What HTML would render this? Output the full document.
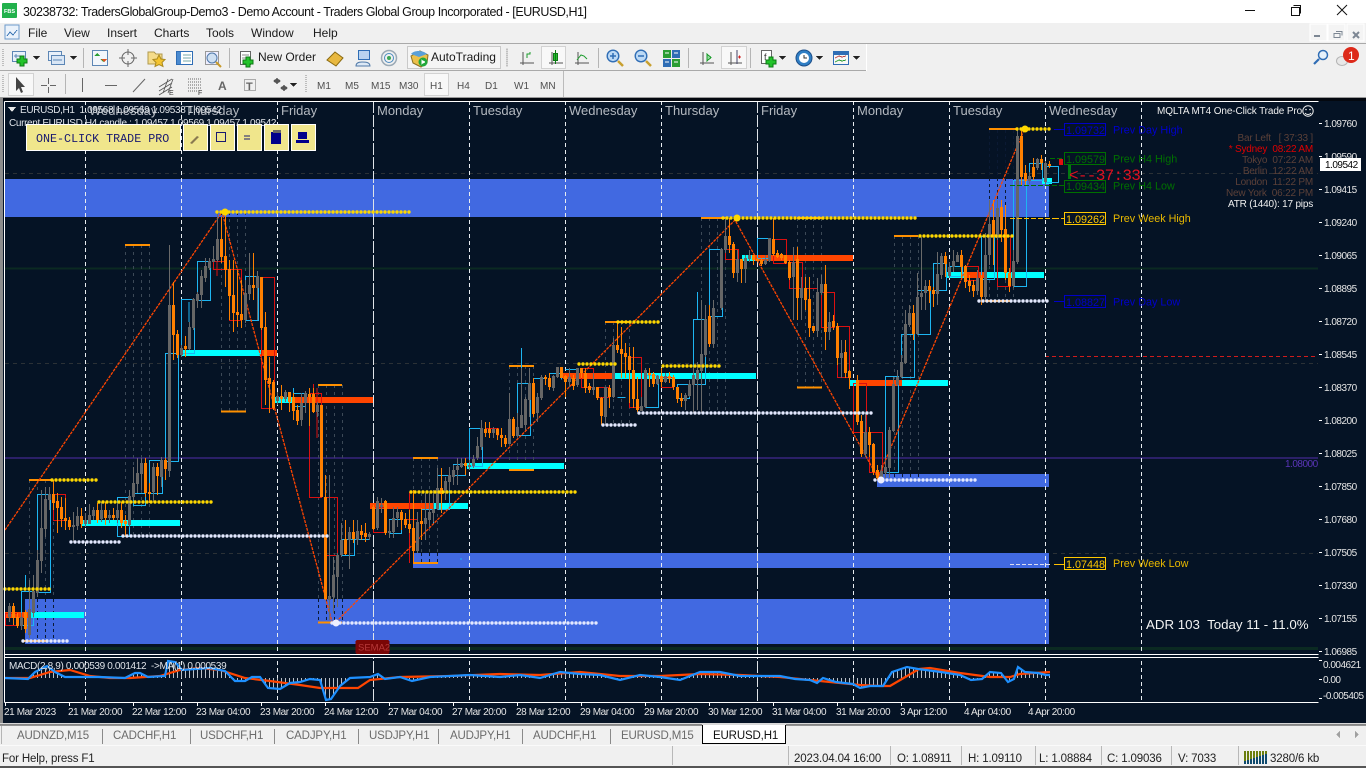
<!DOCTYPE html>
<html lang="en"><head><meta charset="utf-8"><title>MT4 EURUSD,H1</title>
<style>
html,body{margin:0;padding:0;background:#f0f0f0;width:1366px;height:768px;overflow:hidden}
svg{display:block;position:absolute;left:0;top:0}
text{font-family:"Liberation Sans",sans-serif;white-space:pre}
.m{font-size:12px;fill:#1a1a1a}
.t{font-size:10px;fill:#4f4f4f}
.tab{font-size:11.5px;fill:#6b6b6b;letter-spacing:-.15px}
.s{font-size:11.5px;fill:#222;letter-spacing:-.15px}
.day{font-size:13px;fill:#b4b9c0}
.p{font-size:10px;fill:#e6e6e6;letter-spacing:-.5px}
.tm{font-size:10px;fill:#e6e6e6;letter-spacing:-.4px}
.h{font-size:10px;fill:#dfe3e8;letter-spacing:-.35px}
.i{font-size:10px;text-anchor:end;letter-spacing:-.2px}
.v{fill:none;stroke:#e8ecf0;stroke-width:1;stroke-dasharray:4 3}
.g{fill:none;stroke:#2b3136;stroke-width:1;stroke-dasharray:4 4}
.col{fill:none;stroke:#3c4957;stroke-width:1;stroke-dasharray:3 4}
.cold{fill:none;stroke:#0b1a34;stroke-width:1;stroke-dasharray:3 3}
.yd{fill:none;stroke:#ffd800;stroke-width:3.4;stroke-linecap:round;stroke-dasharray:0 4}
.wd{fill:none;stroke:#e4e9ff;stroke-width:3.4;stroke-linecap:round;stroke-dasharray:0 4}
.or{fill:none;stroke:#ff9000;stroke-width:2}
.gw{fill:none;stroke:#6a6a6a;stroke-width:1}
.gb{fill:none;stroke:#666;stroke-width:3}
.ow{fill:none;stroke:#ff8000;stroke-width:1}
.ob{fill:none;stroke:#ff8000;stroke-width:3}
.cy{fill:none;stroke:#1db5f2;stroke-width:1}
.rd{fill:none;stroke:#dc1010;stroke-width:1}
.ic{fill:none;stroke:#555;stroke-width:1}
</style></head><body>
<svg width="1366" height="768" viewBox="0 0 1366 768" shape-rendering="crispEdges">
<defs>
<pattern id="hp" x="1" y="0" width="4" height="10" patternUnits="userSpaceOnUse"><rect x="0" y="0" width="1" height="10" fill="#b9c0c8"/></pattern>
<g id="plus"><path d="M3 0h4v3h3v4H7v3H3V7H0V3h3z" fill="#22c32a" stroke="#0d7a14" stroke-width=".7"/></g>
<g id="axes"><path d="M3 1v13M0 12h14" fill="none" stroke="#555"/></g>
</defs>

<!-- window chrome -->
<rect width="1366" height="23" fill="#fff"/>
<rect y="23" width="1366" height="75" fill="#f0f0f0"/>
<rect x="2" y="3" width="15" height="15" fill="#22b14c" rx="1"/>
<text x="4" y="13" style="font-size:5.5px;font-weight:bold;fill:#fff">FBS</text>
<text x="23" y="16" style="font-size:12.5px;fill:#111" textLength="564" lengthAdjust="spacing">30238732: TradersGlobalGroup-Demo3 - Demo Account - Traders Global Group Incorporated - [EURUSD,H1]</text>
<path d="M1245 10.500h10" stroke="#111" fill="none"/>
<path d="M1291.500 7.500h8v8h-8zM1293.500 5.500h7v8" fill="none" stroke="#111"/>
<path d="M1337 5l10 10M1347 5l-10 10" stroke="#111" fill="none" shape-rendering="auto"/>

<!-- menu -->
<rect x="5" y="25" width="14" height="14" fill="#eaf2fb" stroke="#6c9acb"/>
<path d="M7 36l3-4 3 3 4-5" stroke="#3f78b5" fill="none"/>
<text class="m" x="28" y="37">File</text><text class="m" x="64" y="37">View</text><text class="m" x="107" y="37">Insert</text><text class="m" x="154" y="37">Charts</text><text class="m" x="206" y="37">Tools</text><text class="m" x="251" y="37">Window</text><text class="m" x="313" y="37">Help</text>
<rect x="1310" y="24" width="17" height="17" fill="#f4f4f4" stroke="#fff"/><rect x="1328" y="24" width="17" height="17" fill="#f4f4f4" stroke="#fff"/><rect x="1347" y="24" width="17" height="17" fill="#f4f4f4" stroke="#fff"/>
<rect x="1314" y="35" width="6" height="2" fill="#7d8793"/>
<path d="M1334 33.500h6v4h-6zM1336 31.500h6v4" fill="none" stroke="#7d8793"/>
<path d="M1353 32l6 6M1359 32l-6 6" stroke="#7d8793" stroke-width="2" shape-rendering="auto"/>
<rect y="43" width="866" height="1" fill="#a9a9a9"/><rect x="866" y="43" width="500" height="1" fill="#a9a9a9"/>
<rect y="70" width="866" height="1" fill="#a9a9a9"/><rect x="866" y="44" width="1" height="27" fill="#fff"/>
<rect x="563" y="71" width="1" height="26" fill="#bbb"/>

<!-- toolbar 1 -->
<path d="M3 49v18M3 75v18" stroke="#bdbdbd" stroke-width="2" stroke-dasharray="1 1"/>
<path d="M507 49v18" stroke="#bdbdbd" stroke-width="2" stroke-dasharray="1 1"/>
<path d="M306 75v18" stroke="#bdbdbd" stroke-width="2" stroke-dasharray="1 1"/>
<g>
<rect x="12.500" y="51.500" width="13" height="10" fill="#e8f0fa" stroke="#5c86b5"/><path d="M14 56h9M16 54v4" stroke="#5c86b5"/><use href="#plus" x="17" y="56"/>
<path d="M33 56h7l-3.500 4z" fill="#222"/>
<rect x="48.500" y="51.500" width="13" height="9" fill="#e8f0fa" stroke="#5c86b5"/><rect x="51.500" y="55.500" width="13" height="9" fill="#d9e6f5" stroke="#5c86b5"/><path d="M53 60h9" stroke="#5c86b5"/>
<path d="M70 56h7l-3.500 4z" fill="#222"/>
<rect x="83" y="48" width="1" height="20" fill="#b5b5b5"/>
<rect x="92.500" y="50.500" width="15" height="15" fill="#f2f6fb" stroke="#5c86b5"/><path d="M97 53l3 3h-6zM103 62l-3-3h6z" fill="#2a9d34"/><path d="M101 59l3 3 3-3z" fill="#dd5522"/>
<g shape-rendering="auto"><circle cx="128" cy="58" r="6" fill="none" stroke="#666"/><path d="M128 49v6M128 61v6M119 58h6M131 58h6" stroke="#666"/></g>
<path d="M148 52h6l2 2h6v10h-14z" fill="#f5dc8a" stroke="#b09a50"/><path d="M159 55l2 4 4 .5-3 3 1 4-4-2-4 2 1-4-3-3 4-.5z" fill="#f4c430" stroke="#aa8a20" shape-rendering="auto"/>
<rect x="176.500" y="51.500" width="16" height="13" fill="#fff" stroke="#2f6db5"/><rect x="177" y="52" width="4" height="12" fill="#4a8ad0"/><path d="M183 55h8M183 58h8M183 61h8" stroke="#7aa"/>
<rect x="205.500" y="51.500" width="13" height="13" fill="#eef" stroke="#999"/><g shape-rendering="auto"><circle cx="212" cy="58" r="5" fill="#cfe0f2" stroke="#5079a8"/><path d="M216 62l5 5" stroke="#c89a2a" stroke-width="2"/></g>
<rect x="229" y="48" width="1" height="20" fill="#b5b5b5"/>
<rect x="240.500" y="51.500" width="10" height="13" fill="#fff" stroke="#666"/><path d="M242 55h7M242 58h7" stroke="#888"/><use href="#plus" x="243" y="57"/>
<text x="258" y="61" style="font-size:12px;fill:#1a1a1a">New Order</text>
<path d="M327 60l8-8 8 6-7 8z" fill="#e8b840" stroke="#8a6a10" shape-rendering="auto"/>
<rect x="358.500" y="50.500" width="11" height="9" fill="#b9d3f0" stroke="#2f6db5"/><path d="M356 66c0-3 3-4 6-4s8 0 8 4z" fill="#dce8f5" stroke="#5079a8" shape-rendering="auto"/>
<g shape-rendering="auto" fill="none"><circle cx="389" cy="58" r="7.500" stroke="#9aa9b5" stroke-width="1.500"/><circle cx="389" cy="58" r="4.500" stroke="#4a8ac0"/><circle cx="389" cy="58" r="2" fill="#3aa655"/></g>
<rect x="407.500" y="46.500" width="93" height="22" fill="#f5f5f5" stroke="#c9c9c9"/>
<path d="M411 56l9-5 8 4-1 8-6 4-8-4z" fill="#ecc04a" stroke="#8a7020" shape-rendering="auto"/><path d="M411 54c3-4 12-4 16 0l-8 3z" fill="#5aa0d8" shape-rendering="auto"/><circle cx="423" cy="62" r="4.500" fill="#21a83a" shape-rendering="auto"/><path d="M421.500 59.500l4 2.500-4 2.500z" fill="#fff"/>
<text x="431" y="61" style="font-size:12px;fill:#1a1a1a">AutoTrading</text>
<path d="M507 48v19" stroke="#c5c5c5"/>
<rect x="541.500" y="46.500" width="24" height="22" fill="#f8f8f8" stroke="#d2d2d2"/>
<use href="#axes" x="520" y="51"/><path d="M527 58v-4h3v-2" stroke="#1c9c2c" fill="none"/>
<use href="#axes" x="549" y="51"/><rect x="553.500" y="53.500" width="4" height="7" fill="#25c02e" stroke="#0d7a14"/><path d="M555.500 50v14" stroke="#0d7a14"/>
<use href="#axes" x="575" y="51"/><path d="M577 60l4-5 3 1 3 3" stroke="#1c9c2c" fill="none" shape-rendering="auto"/>
<rect x="598" y="48" width="1" height="20" fill="#b5b5b5"/>
<g shape-rendering="auto">
<circle cx="613" cy="56" r="5.800" fill="#bcd9f5" stroke="#2f6db5" stroke-width="1.400"/><path d="M610 56h6M613 53v6" stroke="#2f6db5" stroke-width="1.500"/><path d="M618 61l5 5" stroke="#c8a030" stroke-width="2.500"/>
<circle cx="641" cy="56" r="5.800" fill="#bcd9f5" stroke="#2f6db5" stroke-width="1.400"/><path d="M638 56h6" stroke="#2f6db5" stroke-width="1.500"/><path d="M646 61l5 5" stroke="#c8a030" stroke-width="2.500"/>
</g>
<rect x="663" y="50" width="8" height="8" fill="#2a9d34"/><rect x="672" y="50" width="8" height="8" fill="#2f6db5"/><rect x="663" y="59" width="8" height="8" fill="#2f6db5"/><rect x="672" y="59" width="8" height="8" fill="#2a9d34"/><path d="M665 53h4M674 53h4M665 62h4M674 62h4" stroke="#fff"/>
<rect x="688" y="48" width="1" height="20" fill="#b5b5b5"/>
<use href="#axes" x="700" y="51"/><path d="M707 54l4 3.500-4 3.500z" fill="#8fd89a" stroke="#1c9c2c"/>
<rect x="721.500" y="46.500" width="25" height="22" fill="#f8f8f8" stroke="#d2d2d2"/><use href="#axes" x="728" y="51"/><path d="M737 50v14" stroke="#446"/><path d="M738 57h3M739.500 55.500v3" stroke="#d02020"/>
<rect x="750" y="48" width="1" height="20" fill="#b5b5b5"/>
<rect x="761.500" y="50.500" width="10" height="13" fill="#fff" stroke="#666"/><text x="764" y="60" style="font-size:9px;fill:#333">f</text><use href="#plus" x="766" y="57"/>
<path d="M779 56h7l-3.500 4z" fill="#222"/>
<g shape-rendering="auto"><circle cx="804" cy="58" r="8" fill="#2f7ec4" stroke="#1d4f8a"/><circle cx="804" cy="58" r="5" fill="#fff"/><path d="M804 55v3h3" stroke="#333" fill="none"/></g>
<path d="M816 56h7l-3.500 4z" fill="#222"/>
<rect x="833.500" y="51.500" width="15" height="13" fill="#f7f7f7" stroke="#2f6db5"/><rect x="834" y="52" width="14" height="3" fill="#2f6db5"/><path d="M835 58l4-2 3 1 4-1" stroke="#b44" fill="none"/><path d="M835 62l4-2 3 1 4-1" stroke="#2a9d34" fill="none"/>
<path d="M853 56h7l-3.500 4z" fill="#222"/>
</g>
<g shape-rendering="auto"><circle cx="1323" cy="55" r="4.500" fill="#e6f1fb" stroke="#2f6db5" stroke-width="1.500"/><path d="M1319 59l-5 5" stroke="#2f6db5" stroke-width="2.200"/>
<ellipse cx="1342" cy="61" rx="5.500" ry="4.500" fill="#e8e8e8" stroke="#b4b4b4"/><circle cx="1351" cy="55" r="8" fill="#dd2a1a"/></g>
<text x="1348" y="60" style="font-size:12px;fill:#fff">1</text>

<!-- toolbar 2 -->
<rect x="8.500" y="73.500" width="25" height="22" fill="#f8f8f8" stroke="#d2d2d2"/>
<path d="M16 77l0 14 3-3 2 5 2-1-2-5 4 0z" fill="#444" shape-rendering="auto"/>
<path d="M41 85.500h6M50 85.500h6M48.500 78v6M48.500 87v6" stroke="#666" fill="none"/>
<rect x="65" y="74" width="1" height="20" fill="#b5b5b5"/>
<path d="M82.500 78v14" stroke="#666"/><path d="M105 85.500h12" stroke="#666"/><path d="M133 92l12-13" stroke="#666" shape-rendering="auto"/>
<g stroke="#555" fill="none" shape-rendering="auto"><path d="M159 87l13-8M159 91l13-8M159 95l13-8M163 93l5-14M168 93l5-14" stroke-width=".8"/></g>
<text x="169" y="95" style="font-size:7px;fill:#333">E</text>
<path d="M188 79h14M188 82h14M188 85h14M188 88h14M188 91h9" stroke="#666" stroke-dasharray="1 1"/>
<text x="198" y="95" style="font-size:7px;fill:#333">F</text>
<text x="218" y="90" style="font-size:12px;font-weight:bold;fill:#666">A</text>
<rect x="244.500" y="79.500" width="11" height="11" fill="none" stroke="#666" stroke-dasharray="1 1"/>
<text x="246" y="90" style="font-size:11px;font-weight:bold;fill:#666">T</text>
<path d="M273 81l4-3 4 3-4 3zM280 88l4-3 4 3-4 3z" fill="#555"/>
<path d="M290 83h7l-3.500 4z" fill="#222"/>
<rect x="424.500" y="73.500" width="24" height="22" fill="#f8f8f8" stroke="#d2d2d2"/>
<text class="t" x="317" y="89">M1</text><text class="t" x="345" y="89">M5</text><text class="t" x="371" y="89">M15</text><text class="t" x="399" y="89">M30</text><text class="t" x="430" y="89">H1</text><text class="t" x="457" y="89">H4</text><text class="t" x="485" y="89">D1</text><text class="t" x="514" y="89">W1</text><text class="t" x="540" y="89">MN</text>

<!-- chart bg -->
<rect y="97" width="1366" height="1" fill="#9a9a9a"/>
<rect y="98" width="1366" height="627" fill="#051325"/>
<rect y="98" width="1366" height="3" fill="#04080f"/>
<rect x="0" y="98" width="3" height="627" fill="#8c8c8c"/>

<!-- grid -->
<path d="M5 173.500H1318M5 363.500H1318M5 553.500H1318" class="g"/>
<path d="M5 268.500H1318" stroke="#0b2a22" stroke-width="2" fill="none"/>
<path d="M5 648.500H1318" stroke="#0b2a22" stroke-width="3" fill="none"/>
<path d="M5 458H1318" stroke="#2b2068" stroke-width="2" fill="none"/>
<path d="M1045 356.500H1318" stroke="#d01c1c" stroke-dasharray="4 3" fill="none"/>

<!-- blue zones -->
<g fill="#4169e1">
<rect x="5" y="179" width="1044" height="38"/>
<rect x="877" y="474" width="172" height="13"/>
<rect x="413" y="553" width="636" height="15"/>
<rect x="25" y="599" width="1024" height="45"/>
</g>

<!-- column dashes -->
<path class="col" d="M125.500 245V536M133.500 245V536M141.500 245V536M149.500 245V536
M221.500 212V411M229.500 212V411M237.500 212V411M245.500 212V411
M318.500 385V599M326.500 385V599M334.500 385V599M342.500 385V599
M29.500 480V599M37.500 480V599M45.500 480V599M53.500 480V599
M605.500 322V425M613.500 322V425M621.500 322V425M629.500 322V425
M509.500 366V470M517.500 366V470M525.500 366V470M533.500 366V470
M413.500 458V553M421.500 458V553M429.500 458V553M437.500 458V553
M701.500 218V412M709.500 218V412M717.500 218V412M725.500 218V412
M797.500 218V387M805.500 218V387M813.500 218V387M821.500 218V387
M894.500 236V474M902.500 236V474M910.500 236V474M918.500 236V474
M989.500 217V300M997.500 217V300M1005.500 217V300M1013.500 217V300"/>
<path class="cold" d="M29.500 599V640M37.500 599V640M45.500 599V640M53.500 599V640M318.500 599V622M326.500 599V622M334.500 599V622M342.500 599V622M413.500 553V563M421.500 553V563M429.500 553V563M437.500 553V563M894.500 474V479M902.500 474V479M910.500 474V479M918.500 474V479M989.500 130V217M997.500 130V217M1005.500 130V217M1013.500 130V217M221.500 212V217M229.500 212V217M237.500 212V217"/>

<!-- vertical separators -->
<path class="v" d="M85.500 101V702M181.500 101V702M277.500 101V702M469.500 101V702M565.500 101V702M661.500 101V702M853.500 101V702M949.500 101V702M1045.500 101V702M1141.500 101V702"/>
<path d="M373.500 101V702M757.500 101V702" stroke="#dfe3e8" fill="none" stroke-dasharray="12 2"/>

<!-- horizontal thick bars -->
<g fill="#00ffff">
<rect x="5" y="612" width="79" height="6"/><rect x="82" y="520" width="98" height="6"/><rect x="182" y="350" width="95" height="6"/><rect x="275" y="397" width="40" height="6"/>
<rect x="433" y="503" width="35" height="6"/><rect x="467" y="463" width="97" height="6"/><rect x="615" y="373" width="141" height="6"/><rect x="742" y="255" width="45" height="6"/>
<rect x="850" y="380" width="7" height="6"/><rect x="902" y="380" width="46" height="6"/><rect x="946" y="272" width="98" height="6"/><rect x="1042" y="178" width="10" height="6"/>
</g>
<g fill="#ff4500">
<rect x="5" y="612" width="23" height="6"/><rect x="262" y="350" width="15" height="6"/><rect x="295" y="397" width="78" height="6"/><rect x="370" y="503" width="63" height="6"/>
<rect x="563" y="373" width="50" height="6"/><rect x="755" y="255" width="98" height="6"/><rect x="857" y="380" width="45" height="6"/><rect x="967" y="272" width="18" height="6"/>
</g>

<!-- orange level lines -->
<path class="or" d="M125 245h25M221 411.500h25M318 385h24M318 622.500h24M29 480h24M605 322h25M509 366h25M509 470h25M413 458h25M413 563h25M701 218h25M797 218h25M797 387.500h25M894 236h24M989 129h28M23 641h24M821 301h0M985 301h25"/>

<!-- boxes -->
<path class="cy" d="M165.500 353.500h13v108h-13zM181.500 299.500h13v54h-13zM197.500 261.500h13v39h-13zM245.500 276.500h13v44h-13zM293.500 393.500h12v13h-12zM21.500 591.500h12v34h-12zM37.500 494.500h13v98h-13zM117.500 497.500h12v39h-12zM133.500 493.500h12v12h-12zM149.500 460.500h13v33h-13zM341.500 539.500h13v16h-13zM354.500 539.500h15M389.500 519.500h12v14h-12zM421.500 509.500h12v14M437.500 475.500h12v34h-12zM453.500 464.500h12v11h-12zM469.500 428.500h13v38h-13zM517.500 383.500h13v52h-13zM533.500 378.500h12v6M549.500 373.500h12v6M565.500 369.500h12v6M617.500 397.500h8M645.500 375.500h13v32h-13zM677.500 384.500h12v14h-12zM693.500 319.500h12v65h-12zM709.500 249.500h13v67h-13zM757.500 238.500h13v20h-13zM885.500 376.500h13v96h-13zM901.500 334.500h13v43h-13zM917.500 290.500h13v44h-13zM933.500 263.500h13v27h-13zM949.500 266.500h13v10h-13zM981.500 236.500h13v43h-13zM1013.500 180.500h13v106h-13zM1029.500 163.500h13v17h-13zM1046.500 166.500h12v16h-12z
M25.500 575v15M189 322v-20M249.500 253v22M293.500 393v-5M461 560v-2M521.500 368v-20M413.500 505v-5M429.500 493v16M697.500 320v-28M889 466V430"/>
<path class="rd" d="M213.500 261.500h13v8h-13zM213.500 269.500h28M229.500 269.500h12v51h-12zM261.500 277.500h13v131h-13zM309.500 393.500h12v104h-12zM325.500 497.500h12v58h-12zM5.500 613.500h12v12h-12zM53.500 494.500h12v26h-12zM373.500 507.500h13v25h-13zM405.500 519.500h12v6M485.500 428.500h13v7M581.500 368.500h12v19h-12zM597.500 387.500h12v10h-12zM629.500 357.500h12v50h-12zM661.500 377.500h12v10h-12zM725.500 249.500h13v10h-13zM773.500 239.500h13v24h-13zM789.500 262.500h13v26h-13zM805.500 288.500h12v10M821.500 292.500h13v35h-13zM837.500 326.500h12v51h-12zM853.500 383.500h13v49h-13zM869.500 432.500h13v40h-13zM965.500 266.500h13v14h-13zM997.500 236.500h13v50h-13z
M409.500 492v71M317 388v50M329.500 475v30M313.500 394v-10M217 261v15"/>

<!-- zigzag -->
<path d="M5 530L222 212 332 622M336 622L735 220 878 478 1024 130" fill="none" stroke="#ff4500" stroke-width="1.300" stroke-dasharray="3 1" shape-rendering="auto"/>

<!-- candles -->
<path class="gw" d="M9.500 603V622M21.500 613V630M29.500 580V638M33.500 575V617M37.500 550V597M41.500 490V573M45.500 487V537M49.500 487V510M73.500 512V542M77.500 507V530M85.500 513V527M89.500 504V524M93.500 507V520M101.500 502V522M109.500 510V523M117.500 503V523M129.500 490V527M133.500 467V500M137.500 458V493M141.500 458V490M153.500 463V502M161.500 457V487M169.500 245V477M181.500 345V357M189.500 322V350M193.500 298V330M197.500 292V308M201.500 270V308M205.500 258V282M209.500 258V270M213.500 246V262M217.500 213V262M245.500 280V323M249.500 253V300M257.500 271V320M277.500 392V405M285.500 390V402M301.500 393V426M305.500 391V413M317.500 402V417M329.500 475V620M333.500 557V613M337.500 553V607M341.500 523V557M349.500 527V569M357.500 520V545M369.500 532V540M377.500 497V530M381.500 498V513M389.500 520V538M393.500 507V538M397.500 507V527M417.500 512V553M425.500 493V540M429.500 493V527M433.500 490V522M437.500 468V510M445.500 477V500M449.500 467V490M453.500 465V485M457.500 458V485M461.500 458V468M469.500 460V470M473.500 455V468M477.500 437V460M481.500 420V450M493.500 427V438M509.500 393V444M517.500 413V437M521.500 368V428M525.500 397V430M529.500 368V417M537.500 393V422M541.500 375V400M553.500 375V391M557.500 367V378M569.500 368V387M577.500 368V387M593.500 373V395M605.500 387V425M613.500 338V398M641.500 397V411M645.500 368V408M657.500 375V385M665.500 373V383M685.500 393V410M689.500 380V397M693.500 367V413M697.500 362V410M701.500 300V413M705.500 305V357M713.500 300V348M721.500 248V310M725.500 218V253M737.500 250V282M745.500 255V283M749.500 250V262M765.500 255V265M769.500 238V262M793.500 247V320M801.500 277V320M817.500 278V337M821.500 275V295M829.500 312V340M841.500 340V378M865.500 413V457M881.500 465V480M885.500 460V478M889.500 427V478M893.500 377V432M897.500 370V386M901.500 355V378M905.500 310V364M909.500 305V327M917.500 273V335M921.500 237V310M925.500 280V310M937.500 252V305M941.500 253V279M949.500 262V278M953.500 250V272M957.500 252V262M977.500 270V295M985.500 233V300M989.500 200V265M997.500 200V240M1013.500 250V288M1017.500 130V264M1029.500 172V184M1037.500 158V170M1045.500 161V185"/>
<path class="gb" d="M9.500 606V617M21.500 617V626M29.500 609V635M33.500 591V613M37.500 560V593M41.500 528V561M45.500 499V529M49.500 494V500M73.500 525V527M77.500 516V526M85.500 520V524M89.500 515V524M93.500 510V516M101.500 510V519M109.500 515V518M117.500 510V518M129.500 496V525M133.500 483V497M137.500 473V484M141.500 463V474M153.500 467V492M161.500 460V477M169.500 305V471M181.500 348V355M189.500 327V349M193.500 299V328M197.500 294V301M201.500 276V295M205.500 266V278M209.500 261V268M213.500 259V262M217.500 239V260M245.500 293V320M249.500 285V294M257.500 276V288M277.500 396V401M285.500 392V399M301.500 403V420M305.500 393V403M317.500 405V412M329.500 596V600M333.500 575V597M337.500 555V577M341.500 540V555M349.500 532V540M357.500 531V540M369.500 534V537M377.500 501V528M381.500 505V507M389.500 531V533M393.500 518V532M397.500 512V518M417.500 522V551M425.500 518V524M429.500 512V520M433.500 509V513M437.500 488V509M445.500 481V493M449.500 475V482M453.500 470V477M457.500 466V470M461.500 463V467M469.500 465V467M473.500 459V466M477.500 446V458M481.500 428V447M493.500 429V433M509.500 419V444M517.500 427V436M521.500 415V428M525.500 399V425M529.500 383V400M537.500 397V413M541.500 377V398M553.500 376V388M557.500 367V377M569.500 377V382M577.500 368V385M593.500 387V390M605.500 387V417M613.500 345V397M641.500 406V411M645.500 370V407M657.500 376V384M665.500 376V382M685.500 395V401M689.500 384V396M693.500 375V385M697.500 370V380M701.500 354V371M705.500 319V355M713.500 308V344M721.500 249V308M725.500 236V250M737.500 259V273M745.500 258V269M749.500 255V259M765.500 260V264M769.500 238V261M793.500 262V277M801.500 288V298M817.500 292V331M821.500 284V293M829.500 322V332M841.500 353V358M865.500 432V454M881.500 471V478M885.500 467V473M889.500 430V468M893.500 384V431M897.500 377V385M901.500 362V377M905.500 324V363M909.500 313V325M917.500 297V334M921.500 293V297M925.500 286V293M937.500 274V294M941.500 256V275M949.500 267V276M953.500 261V267M957.500 255V262M977.500 278V291M985.500 255V297M989.500 224V255M997.500 208V238M1013.500 261V286M1017.500 136V262M1029.500 176V181M1037.500 159V168M1045.500 163V182"/>
<path class="ow" d="M13.500 603V625M17.500 613V628M25.500 610V633M53.500 480V510M57.500 493V533M61.500 497V527M65.500 498V530M69.500 517V530M81.500 508V528M97.500 503V523M105.500 502V525M113.500 508V520M121.500 502V528M125.500 515V537M145.500 458V497M149.500 483V503M157.500 463V495M165.500 458V480M173.500 282V360M177.500 330V358M185.500 336V357M221.500 217V263M225.500 215V287M229.500 260V320M233.500 260V332M237.500 270V327M241.500 280V328M253.500 253V300M261.500 277V330M265.500 312V405M269.500 357V413M273.500 380V410M281.500 385V410M289.500 392V412M293.500 393V420M297.500 405V425M309.500 388V426M313.500 388V413M321.500 405V497M325.500 475V600M345.500 520V555M353.500 520V543M361.500 525V540M365.500 523V542M373.500 505V530M385.500 500V535M401.500 510V530M405.500 513V528M409.500 510V533M413.500 490V563M421.500 508V540M441.500 468V513M465.500 458V475M485.500 422V437M489.500 422V438M497.500 428V440M501.500 428V447M505.500 435V447M513.500 417V438M533.500 378V417M545.500 375V385M549.500 373V390M561.500 367V378M565.500 375V397M573.500 375V390M581.500 368V378M585.500 368V393M589.500 383V393M597.500 387V400M601.500 397V425M609.500 385V408M617.500 323V353M621.500 327V378M625.500 343V378M629.500 347V403M633.500 347V408M637.500 377V412M649.500 368V387M653.500 372V387M661.500 368V387M669.500 372V383M673.500 375V390M677.500 387V403M681.500 393V407M709.500 305V347M729.500 218V253M733.500 242V278M741.500 259V283M753.500 255V265M757.500 258V262M761.500 258V266M773.500 218V256M777.500 250V258M781.500 253V260M785.500 255V264M789.500 260V280M797.500 247V320M805.500 277V310M809.500 277V337M813.500 326V333M825.500 265V350M833.500 315V330M837.500 323V365M845.500 340V378M849.500 370V389M857.500 375V425M861.500 415V457M869.500 427V457M873.500 443V475M877.500 465V480M913.500 305V340M929.500 280V303M933.500 287V307M945.500 252V277M961.500 250V278M965.500 265V288M969.500 275V292M973.500 280V297M981.500 275V305M993.500 200V265M1001.500 200V242M1005.500 205V280M1009.500 268V292M1021.500 130V185M1025.500 165V185M1033.500 158V180M1041.500 155V170M1049.500 161V168"/>
<path class="ob" d="M13.500 606V618M17.500 617V626M25.500 612V629M53.500 494V503M57.500 501V508M61.500 507V519M65.500 518V521M69.500 520V527M81.500 516V524M97.500 510V520M105.500 510V518M113.500 515V518M121.500 510V523M125.500 521V524M145.500 463V493M149.500 492V494M157.500 467V476M165.500 460V469M173.500 305V335M177.500 334V355M185.500 346V349M221.500 239V257M225.500 256V270M229.500 269V296M233.500 295V313M237.500 312V315M241.500 314V320M253.500 285V288M261.500 277V328M265.500 327V380M269.500 378V384M273.500 382V408M281.500 396V399M289.500 392V402M293.500 397V411M297.500 410V421M309.500 394V397M313.500 394V412M321.500 405V497M325.500 497V599M345.500 539V554M353.500 532V539M361.500 531V535M365.500 533V537M373.500 507V529M385.500 501V533M401.500 512V520M405.500 519V525M409.500 524V529M413.500 528V551M421.500 521V524M441.500 488V494M465.500 463V466M485.500 429V433M489.500 429V433M497.500 429V435M501.500 435V438M505.500 438V444M513.500 419V436M533.500 383V414M545.500 377V379M549.500 378V387M561.500 367V378M565.500 376V382M573.500 378V386M581.500 368V373M585.500 373V388M589.500 386V390M597.500 387V398M601.500 398V416M609.500 388V397M617.500 345V350M621.500 349V354M625.500 353V357M629.500 356V370M633.500 370V399M637.500 399V410M649.500 373V375M653.500 374V384M661.500 376V382M669.500 376V379M673.500 377V387M677.500 387V399M681.500 398V401M709.500 316V344M729.500 236V245M733.500 244V273M741.500 259V269M753.500 255V260M757.500 259V261M761.500 260V264M773.500 239V254M777.500 253V257M781.500 254V258M785.500 255V263M789.500 262V278M797.500 259V298M805.500 288V300M809.500 299V328M813.500 326V331M825.500 284V332M833.500 321V327M837.500 326V358M845.500 352V373M849.500 371V378M857.500 380V422M861.500 421V454M869.500 432V445M873.500 444V472M877.500 470V478M913.500 313V334M929.500 286V291M933.500 290V294M945.500 256V264M961.500 255V267M965.500 266V282M969.500 281V286M973.500 285V291M981.500 278V297M993.500 220V237M1001.500 207V230M1005.500 229V273M1009.500 273V286M1021.500 136V177M1025.500 173V181M1033.500 167V177M1041.500 159V163M1049.500 164V166"/>
<rect x="1059" y="159" width="4" height="6" fill="#e01010"/>

<!-- dot lines -->
<g shape-rendering="auto">
<path class="yd" d="M217 212H410M5 589H50M52 480H98M99 502H214M411 492H578M579 364H618M618 322H662M663 366H723M723 218H918M920 236H1015M1017 129H1050"/>
<path class="wd" d="M23 641H70M71 542H123M123 536H331M332 623H600M603 425H638M639 413H875M875 480H978M979 301H1050"/>
<circle cx="225" cy="212" r="3.500" fill="#ffd800"/><circle cx="737" cy="218" r="3.500" fill="#ffd800"/><circle cx="1025" cy="129" r="3.500" fill="#ffd800"/>
<circle cx="336" cy="623" r="3.500" fill="#eef"/><circle cx="881" cy="480" r="3.500" fill="#eef"/>
</g>

<!-- right level labels -->
<path d="M1054 129.500h10" stroke="#0000c8"/><path d="M1050 158.500h14" stroke="#007000" stroke-dasharray="5 2"/><path d="M1010 185.500h54" stroke="#007000" stroke-dasharray="5 2"/><path d="M1010 218.500h44M1054 218.500h10" stroke="#ffc000" stroke-dasharray="5 2"/><path d="M1054 301.500h10" stroke="#0000c8"/><path d="M1010 564.500h40" stroke="#dde" stroke-dasharray="4 2"/><path d="M1054 564.500h10" stroke="#ffc000"/>
<g style="font-size:10.800px">
<rect x="1064.500" y="123.500" width="41" height="12" fill="none" stroke="#0000c8"/><text x="1066" y="134" fill="#0000c8">1.09732</text><text x="1113" y="133.500" fill="#0000cd">Prev Day High</text>
<rect x="1064.500" y="152.500" width="41" height="12" fill="none" stroke="#007000"/><text x="1066" y="163" fill="#007000">1.09579</text><text x="1113" y="162.500" fill="#007000">Prev H4 High</text>
<rect x="1064.500" y="180.500" width="41" height="12" fill="none" stroke="#007000"/><text x="1066" y="190" fill="#007000">1.09434</text><text x="1113" y="189.500" fill="#007000">Prev H4 Low</text>
<rect x="1064.500" y="212.500" width="41" height="12" fill="none" stroke="#ffc800"/><text x="1066" y="223" fill="#ffc800">1.09262</text><text x="1113" y="222" fill="#e8b800">Prev Week High</text>
<rect x="1064.500" y="295.500" width="41" height="12" fill="none" stroke="#0000c8"/><text x="1066" y="306" fill="#0000c8">1.08827</text><text x="1113" y="305.500" fill="#0000cd">Prev Day Low</text>
<rect x="1064.500" y="557.500" width="41" height="12" fill="none" stroke="#ffc800"/><text x="1066" y="568" fill="#ffc800">1.07448</text><text x="1113" y="567" fill="#e8b800">Prev Week Low</text>
</g>
<rect x="1068" y="165" width="3" height="14" fill="#007a10"/>
<text x="1069" y="180" style="font-size:16px;fill:#e01020;letter-spacing:-.7px;font-family:'Liberation Mono',monospace">&lt;--37:33</text>

<!-- info panel -->
<text class="i" x="1313" y="141" fill="#5b4038">Bar Left   [ 37:33 ]</text>
<text class="i" x="1313" y="152" fill="#e00000">* Sydney  08:22 AM</text>
<text class="i" x="1313" y="163" fill="#5b4038">Tokyo  07:22 AM</text>
<text class="i" x="1313" y="174" fill="#5b4038">Berlin  12:22 AM</text>
<text class="i" x="1313" y="185" fill="#5b4038">London  11:22 PM</text>
<text class="i" x="1313" y="196" fill="#5b4038">New York  06:22 PM</text>
<text class="i" x="1313" y="207" fill="#f0f0f0">ATR (1440): 17 pips</text>
<text x="1157" y="114" style="font-size:10px;fill:#eee;letter-spacing:-.12px">MQLTA MT4 One-Click Trade Pro</text>
<g shape-rendering="auto" fill="none" stroke="#eee"><circle cx="1308" cy="111" r="5.200"/><path d="M1305 113c1.500 2 4.500 2 6 0"/></g><circle cx="1306" cy="109.500" r=".8" fill="#eee" shape-rendering="auto"/><circle cx="1310" cy="109.500" r=".8" fill="#eee" shape-rendering="auto"/>

<!-- chart text -->
<text class="day" x="89" y="115">Wednesday</text><text class="day" x="185" y="115">Thursday</text><text class="day" x="281" y="115">Friday</text><text class="day" x="377" y="115">Monday</text><text class="day" x="473" y="115">Tuesday</text><text class="day" x="569" y="115">Wednesday</text><text class="day" x="665" y="115">Thursday</text><text class="day" x="761" y="115">Friday</text><text class="day" x="857" y="115">Monday</text><text class="day" x="953" y="115">Tuesday</text><text class="day" x="1049" y="115">Wednesday</text>
<path d="M8 107h8l-4 5z" fill="#e6e6e6"/>
<text class="h" x="20" y="113">EURUSD,H1  1.09568 1.09569 1.09538 1.09542</text>
<text class="h" x="9" y="126">Current EURUSD H4 candle : 1.09457,1.09569,1.09457,1.09542</text>

<!-- one click panel -->
<g stroke="#fff" fill="#f0e68c">
<rect x="26.500" y="124.500" width="154" height="26"/><rect x="183.500" y="124.500" width="24" height="26"/><rect x="210.500" y="124.500" width="24" height="26"/><rect x="237.500" y="124.500" width="24" height="26"/><rect x="264.500" y="124.500" width="24" height="26"/><rect x="291.500" y="124.500" width="24" height="26"/>
</g>
<text x="36" y="142" style="font-family:'Liberation Mono',monospace;font-size:11.700px;fill:#191970">ONE-CLICK TRADE PRO</text>
<path d="M190 143l7-7 2 1-7 7z" fill="#8a7a50" shape-rendering="auto"/>
<rect x="216.500" y="132.500" width="9" height="9" fill="none" stroke="#191970"/>
<path d="M244 136h6M244 139h6" stroke="#191970"/>
<rect x="271" y="132" width="10" height="12" fill="#00008b"/><rect x="273" y="130" width="8" height="3" fill="#666"/>
<rect x="298" y="132" width="9" height="7" fill="#00008b"/><rect x="296" y="140" width="13" height="3" fill="#00008b"/>

<text x="1146" y="629" style="font-size:13.300px;fill:#f2f2f2">ADR 103  Today 11 - 11.0%</text>
<text x="1285" y="467" style="font-size:10px;fill:#5a35b8;letter-spacing:-.5px">1.08000</text>
<rect x="355.500" y="640" width="34" height="14" rx="2" fill="#7a0606"/>
<text x="358" y="650.500" style="font-size:9.500px;fill:#b83a3a">SEMA2</text>

<!-- axes/borders -->
<rect x="1318.500" y="101.500" width="0" height="601" stroke="#fff" fill="none"/>
<path d="M4.500 101.500H1318.500M4.500 101.500V702.500M4.500 654.500H1318.500M4.500 657.500H1318.500M4.500 702.500H1318.500" fill="none" stroke="#fff"/>
<rect x="5" y="655" width="1313" height="2" fill="#051325"/>
<path d="M1319 123.500h3M1319 156.500h3M1319 189.500h3M1319 222.500h3M1319 255.500h3M1319 288.500h3M1319 321.500h3M1319 354.500h3M1319 387.500h3M1319 420.500h3M1319 453.500h3M1319 486.500h3M1319 519.500h3M1319 552.500h3M1319 585.500h3M1319 618.500h3M1319 651.500h3M1319 660.500h3M1319 679.500h3M1319 698.500h3" stroke="#fff"/>
<g class="px">
<text class="p" x="1324" y="127">1.09760</text><text class="p" x="1324" y="160">1.09590</text><text class="p" x="1324" y="193">1.09415</text><text class="p" x="1324" y="226">1.09240</text><text class="p" x="1324" y="259">1.09065</text><text class="p" x="1324" y="292">1.08895</text><text class="p" x="1324" y="325">1.08720</text><text class="p" x="1324" y="358">1.08545</text><text class="p" x="1324" y="391">1.08370</text><text class="p" x="1324" y="424">1.08200</text><text class="p" x="1324" y="457">1.08025</text><text class="p" x="1324" y="490">1.07850</text><text class="p" x="1324" y="523">1.07680</text><text class="p" x="1324" y="556">1.07505</text><text class="p" x="1324" y="589">1.07330</text><text class="p" x="1324" y="622">1.07155</text><text class="p" x="1324" y="655">1.06985</text>
<text class="p" x="1323" y="668">0.004621</text><text class="p" x="1323" y="683">0.00</text><text class="p" x="1323" y="699">-0.005405</text>
</g>
<rect x="1320" y="158" width="41" height="13" fill="#fff"/>
<text x="1325" y="168" style="font-size:10px;fill:#000;letter-spacing:-.5px">1.09542</text>

<!-- MACD -->
<g shape-rendering="auto">
<path d="M5 678L28 679 35 672 47 666 55 672 65 677 100 677 125 678 135 673 140 673 148 677 165 676 168 661 175 662 182 670 195 669 210 668 225 671 235 681 245 681 252 677 260 677 268 688 280 689 290 683 300 682 310 679 320 680 326 700 331 699 340 686 350 678 370 677 378 674 385 679 400 677 412 681 430 677 470 675 500 677 520 675 540 678 560 672 580 674 600 675 620 680 640 675 660 677 680 680 700 672 720 672 740 676 760 676 780 676 795 679 810 680 817 683 823 678 836 682 853 684 860 688 870 686 883 686 892 672 907 667 918 669 941 672 960 675 971 680 982 679 990 672 1001 673 1008 682 1014 679 1018 667 1025 672 1038 673 1046 675 1050 675V678H5Z" fill="url(#hp)" stroke="none"/>
<path d="M5 678L30 678 50 672 70 670 90 676 110 678 130 678 160 676 180 670 200 668 220 670 245 678 270 681 300 685 320 688 340 688 358 688 370 680 400 677 450 676 500 674 540 675 580 672 620 676 660 676 700 674 740 675 780 677 800 679 830 682 860 685 880 686 890 686 919 669 930 668 960 673 990 677 1010 677 1020 674 1050 672" fill="none" stroke="#ff4500" stroke-width="2.200"/>
<path d="M5 678L28 679 35 672 47 666 55 672 65 677 100 677 125 678 135 673 140 673 148 677 165 676 168 661 175 662 182 670 195 669 210 668 225 671 235 681 245 681 252 677 260 677 268 688 280 689 290 683 300 682 310 679 320 680 326 700 331 699 340 686 350 678 370 677 378 674 385 679 400 677 412 681 430 677 470 675 500 677 520 675 540 678 560 672 580 674 600 675 620 680 640 675 660 677 680 680 700 672 720 672 740 676 760 676 780 676 795 679 810 680 817 683 823 678 836 682 853 684 860 688 870 686 883 686 892 672 907 667 918 669 941 672 960 675 971 680 982 679 990 672 1001 673 1008 682 1014 679 1018 667 1025 672 1038 673 1046 675 1050 675" fill="none" stroke="#1e90ff" stroke-width="2.200"/>
</g>
<text class="h" x="9" y="669">MACD(2,8,9) 0.000539 0.001412  -&gt;MA(1) 0.000539</text>

<!-- time axis -->
<path d="M5.500 703v3M69.500 703v3M133.500 703v3M197.500 703v3M261.500 703v3M325.500 703v3M389.500 703v3M453.500 703v3M517.500 703v3M581.500 703v3M645.500 703v3M709.500 703v3M773.500 703v3M837.500 703v3M901.500 703v3M965.500 703v3M1029.500 703v3" stroke="#fff"/>
<text class="tm" x="4" y="715">21 Mar 2023</text><text class="tm" x="68" y="715">21 Mar 20:00</text><text class="tm" x="132" y="715">22 Mar 12:00</text><text class="tm" x="196" y="715">23 Mar 04:00</text><text class="tm" x="260" y="715">23 Mar 20:00</text><text class="tm" x="324" y="715">24 Mar 12:00</text><text class="tm" x="388" y="715">27 Mar 04:00</text><text class="tm" x="452" y="715">27 Mar 20:00</text><text class="tm" x="516" y="715">28 Mar 12:00</text><text class="tm" x="580" y="715">29 Mar 04:00</text><text class="tm" x="644" y="715">29 Mar 20:00</text><text class="tm" x="708" y="715">30 Mar 12:00</text><text class="tm" x="772" y="715">31 Mar 04:00</text><text class="tm" x="836" y="715">31 Mar 20:00</text><text class="tm" x="900" y="715">3 Apr 12:00</text><text class="tm" x="964" y="715">4 Apr 04:00</text><text class="tm" x="1028" y="715">4 Apr 20:00</text>

<!-- tabs -->
<rect y="723" width="1366" height="2" fill="#d8d8d8"/>
<rect y="725" width="1366" height="20" fill="#f0f0f0"/>
<rect y="724.500" width="702" height="1" fill="#333"/><rect x="786" y="724.500" width="580" height="1" fill="#333"/>
<path d="M702.500 725V743.500H785.500V725" fill="#fff" stroke="#000"/>
<path d="M1.500 726V744" stroke="#b5b5b5"/>
<path d="M102.500 729v15M190.500 729v15M274.500 729v15M358.500 729v15M438.500 729v15M522.500 729v15M610.500 729v15" stroke="#8a8a8a"/>
<text class="tab" x="17" y="739">AUDNZD,M15</text><text class="tab" x="113" y="739">CADCHF,H1</text><text class="tab" x="200" y="739">USDCHF,H1</text><text class="tab" x="286" y="739">CADJPY,H1</text><text class="tab" x="369" y="739">USDJPY,H1</text><text class="tab" x="450" y="739">AUDJPY,H1</text><text class="tab" x="533" y="739">AUDCHF,H1</text><text class="tab" x="621" y="739">EURUSD,M15</text><text class="tab" x="713" y="739" style="fill:#111">EURUSD,H1</text>
<path d="M1340 731v7l-4-3.500zM1355 731v7l4-3.500z" fill="#a0a0a0"/>

<!-- status -->
<rect y="745" width="1366" height="1" fill="#fafafa"/>
<rect y="746" width="1366" height="20" fill="#f0f0f0"/>
<rect y="766" width="1366" height="2" fill="#555"/>
<path d="M672.500 746v19M788.500 746v19M890.500 746v19M961.500 746v19M1035.500 746v19M1101.500 746v19M1171.500 746v19M1238.500 746v19" stroke="#b8b8b8"/>
<text class="s" x="2" y="762">For Help, press F1</text>
<text class="s" x="794" y="762">2023.04.04 16:00</text>
<text class="s" x="897" y="762">O: 1.08911</text>
<text class="s" x="968" y="762">H: 1.09110</text>
<text class="s" x="1039" y="762">L: 1.08884</text>
<text class="s" x="1107" y="762">C: 1.09036</text>
<text class="s" x="1178" y="762">V: 7033</text>
<text class="s" x="1270" y="762">3280/6 kb</text>
<path d="M1244 751h2v13h-2zM1247 751h2v13h-2zM1250 751h2v13h-2zM1253 751h2v13h-2zM1256 751h2v13h-2zM1259 751h2v13h-2zM1262 751h2v13h-2zM1265 751h2v13h-2z" fill="#6b7f10"/>
<path d="M1244 761h2v3h-2zM1247 760h2v4h-2zM1250 759h2v5h-2zM1253 758h2v6h-2zM1256 757h2v7h-2zM1259 756h2v8h-2zM1262 755h2v9h-2zM1265 754h2v10h-2z" fill="#0f4a6e"/>
</svg>
</body></html>
